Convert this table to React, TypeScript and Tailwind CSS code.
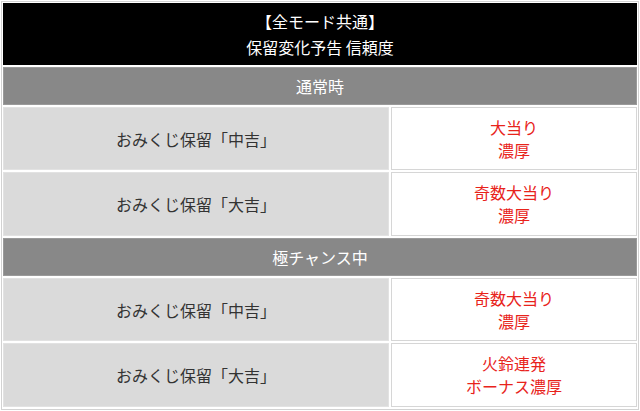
const font = { fontFamily: '"Noto Sans CJK JP", "Noto Sans", sans-serif' };

type Row = { label: string; lines: string[] };

const sections: { title: string; rows: Row[] }[] = [
  {
    title: '通常時',
    rows: [
      { label: 'おみくじ保留「中吉」', lines: ['大当り', '濃厚'] },
      { label: 'おみくじ保留「大吉」', lines: ['奇数大当り', '濃厚'] },
    ],
  },
  {
    title: '極チャンス中',
    rows: [
      { label: 'おみくじ保留「中吉」', lines: ['奇数大当り', '濃厚'] },
      { label: 'おみくじ保留「大吉」', lines: ['火鈴連発', 'ボーナス濃厚'] },
    ],
  },
];

function DataRow({ row, tall }: { row: Row; tall?: boolean }) {
  return (
    <div className={`flex gap-[2px] ${tall ? 'h-[64px]' : 'h-[63px]'}`}>
      <div className="w-[386px] flex items-center justify-center bg-[#dadada] border border-[#e2e2e2] text-[16px] text-[#333]">
        {row.label}
      </div>
      <div className="flex-1 flex flex-col items-center justify-center bg-white border border-[#d6d6d6] text-[16px] leading-[23px] text-[#e8231b]">
        {row.lines.map((l) => (
          <span key={l}>{l}</span>
        ))}
      </div>
    </div>
  );
}

export default function App() {
  return (
    <div className="w-[640px] h-[411px] bg-white p-[1px]" style={font}>
      <div className="h-full border border-[#d2d2d2] p-[1px] flex flex-col gap-[2px]">
        <div className="h-[62px] bg-black flex flex-col items-center justify-center text-white text-[16px] leading-[26px]">
          <span>【全モード共通】</span>
          <span>保留変化予告 信頼度</span>
        </div>
        {sections.map((s) => (
          <div key={s.title} className="flex flex-col gap-[2px]">
            <div className="h-[38px] bg-[#888888] border border-[#9a9a9a] flex items-center justify-center text-white text-[16px]">
              {s.title}
            </div>
            {s.rows.map((r, i) => (
              <DataRow key={i} row={r} tall={i === 1} />
            ))}
          </div>
        ))}
      </div>
    </div>
  );
}
